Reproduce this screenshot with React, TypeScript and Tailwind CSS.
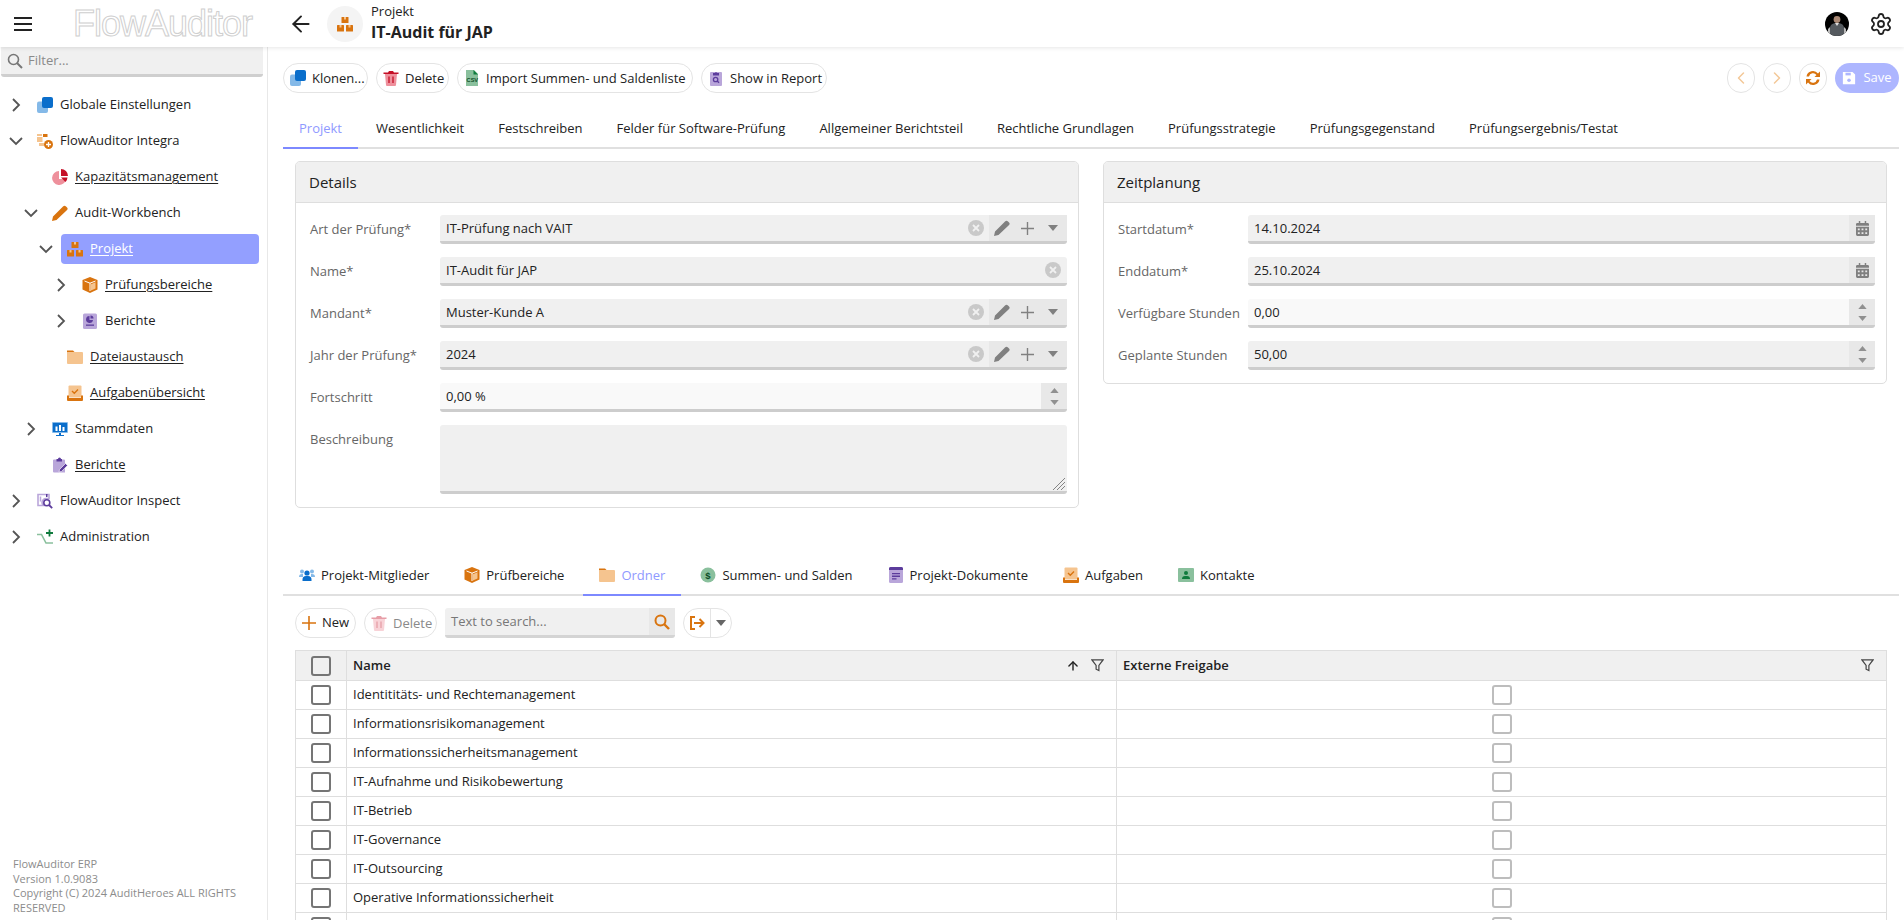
import type { ReactNode } from "react";
import { ArrowLeft, ArrowUp, ChevronLeft, ChevronRight, Settings } from "lucide-react";

type IconProps = { className?: string };

function Svg({ className = "size-4", children }: IconProps & { children: ReactNode }) {
  return (
    <svg viewBox="0 0 16 16" className={`shrink-0 ${className}`}>
      {children}
    </svg>
  );
}

const orange = "#d9740f";
const orangeLight = "#f5c48f";
const blue = "#0a6ecb";
const blueLight = "#84b9e8";
const red = "#c40f26";
const redLight = "#ee909c";
const purple = "#5c3c9c";
const purpleLight = "#b9a6da";
const green = "#0f7b3d";
const greenLight = "#8ac09d";

const CloneIcon = ({ className }: IconProps) => (
  <Svg className={className}>
    <rect x="0" y="4.5" width="11" height="11.5" rx="2" fill={blueLight} />
    <rect x="5" y="0" width="11" height="11" rx="2" fill={blue} />
  </Svg>
);
const IntegraIcon = () => (
  <Svg>
    <rect x="0" y="4" width="5.5" height="5" fill={orangeLight} />
    <rect x="6" y="1" width="4.5" height="3" fill={orange} />
    <rect x="0" y="1" width="5" height="2" fill={orangeLight} />
    <rect x="2" y="10" width="5" height="3" fill={orangeLight} />
    <circle cx="11.5" cy="11.5" r="4.5" fill={orange} />
    <path d="M11.5 9v5M9 11.5h5" stroke="#fff" strokeWidth="1.3" />
  </Svg>
);
const PieIcon = () => (
  <Svg>
    <path d="M7 2a7 7 0 1 0 7 8H7z" fill={redLight} />
    <path d="M9 0a7 7 0 0 1 7 7H9z" fill={red} />
    <path d="M9 8.5h6.5A7 7 0 0 1 13.5 13z" fill={red} />
  </Svg>
);
const PencilIcon = () => (
  <Svg>
    <path d="M0 16l1-4.5L11 1.5a2 2 0 0 1 3 0l.8.8a2 2 0 0 1 0 3L4.5 15z" fill={orange} />
  </Svg>
);
const BoxesIcon = () => (
  <Svg>
    <rect x="4.5" y="1" width="7" height="6" rx="0.5" fill={orange} />
    <rect x="7" y="1" width="2" height="2.5" fill={orangeLight} />
    <rect x="0" y="9" width="7" height="6.5" rx="0.5" fill={orange} />
    <rect x="2.5" y="9" width="2" height="2.5" fill={orangeLight} />
    <rect x="9" y="9" width="7" height="6.5" rx="0.5" fill={orange} />
    <rect x="11.5" y="9" width="2" height="2.5" fill={orangeLight} />
  </Svg>
);
const CubeIcon = () => (
  <Svg>
    <path d="M8 0l7.5 3v9.5L8 16 .5 12.5V3z" fill={orange} />
    <path d="M2.5 4L8 6.2 13.5 4M8 6.2V14" fill="none" stroke="#fff" strokeWidth="1" />
    <path d="M9 7.2l4.5-2v6.4L9 13.6z" fill={orangeLight} />
  </Svg>
);
const ReportIcon = () => (
  <Svg>
    <rect x="1" y="0.5" width="14" height="15.5" rx="1.5" fill={purpleLight} />
    <path d="M7.5 3a3.5 3.5 0 1 0 3.5 4H7.5z" fill={purple} />
    <path d="M8.5 2.5a3 3 0 0 1 3 3h-3z" fill={purple} />
    <rect x="4" y="11.5" width="8" height="1.3" fill={purple} />
  </Svg>
);
const FolderIcon = () => (
  <Svg>
    <path d="M0 1.5h6l2 2H0z" fill={orange} />
    <rect x="0" y="3" width="16" height="12" rx="1" fill={orangeLight} />
  </Svg>
);
const TrayIcon = () => (
  <Svg>
    <rect x="1.5" y="0.5" width="13" height="12" rx="1" fill={orangeLight} />
    <path d="M5 6l2.3 2.2L11 4.5" fill="none" stroke={orange} strokeWidth="1.4" />
    <path d="M0 10.5h2v2.5h12v-2.5h2V15a1 1 0 0 1-1 1H1a1 1 0 0 1-1-1z" fill={orange} />
  </Svg>
);
const MonitorIcon = () => (
  <Svg>
    <rect x="0" y="1" width="16" height="11" rx="1" fill={blueLight} />
    <rect x="1" y="2" width="14" height="9" fill={blue} />
    <path d="M3.5 5.5h2V10h-2zM7 4h2v6H7zM10.5 6h2v4h-2z" fill="#fff" />
    <path d="M7 12h2v2h3v1H4v-1h3z" fill={blue} />
  </Svg>
);
const ClipboardPenIcon = () => (
  <Svg>
    <path d="M1 3.5a1 1 0 0 1 1-1h10a1 1 0 0 1 1 1v12H2a1 1 0 0 1-1-1z" fill={purpleLight} />
    <path d="M4.5 2h1.5a1.5 1.5 0 0 1 3 0H10v2.5H4.5z" fill={purple} />
    <path d="M7 15l.6-2.6L13.5 6.5l2 2-5.9 5.9z" fill={purple} stroke="#fff" strokeWidth="0.6" />
  </Svg>
);
const InspectIcon = () => (
  <Svg>
    <path d="M1 1.5h11v4H9.5a4 4 0 0 0-3 7H1z" fill="none" stroke={purpleLight} strokeWidth="1.6" />
    <path d="M3.5 3.5v5" stroke={purpleLight} strokeWidth="1.5" />
    <path d="M9 1v3h1.5V1z" fill={purple} />
    <circle cx="9.8" cy="9.8" r="3" fill="none" stroke={purple} strokeWidth="1.6" />
    <path d="M12 12l3.2 3.2" stroke={purple} strokeWidth="1.8" />
  </Svg>
);
const AdminIcon = () => (
  <Svg>
    <path d="M0 5.5h4.5L9 14h7" fill="none" stroke={greenLight} strokeWidth="1.6" />
    <path d="M12.5 0.5v7M9 4h7" stroke={green} strokeWidth="1.8" />
  </Svg>
);
const TrashIcon = ({ faded }: { faded?: boolean }) => (
  <Svg className={`size-4 ${faded ? "opacity-40" : ""}`}>
    <path d="M2 4h12l-1 11a1 1 0 0 1-1 1H4a1 1 0 0 1-1-1z" fill={redLight} />
    <path d="M0.5 2.5H5L6 1h4l1 1.5h4.5V4H.5z" fill={red} />
    <path d="M6 6.5v6.5M10 6.5v6.5" stroke={red} strokeWidth="1.3" />
  </Svg>
);
const CsvIcon = () => (
  <Svg>
    <path d="M2 0h8l4 4v12H2z" fill={greenLight} />
    <path d="M9.5 0L14 4.5H9.5z" fill={green} />
    <text x="2.6" y="12.4" fontSize="5.6" fontWeight="700" fill="#0a4d26" fontFamily="Liberation Sans">
      CSV
    </text>
  </Svg>
);
const ClipboardSearchIcon = () => (
  <Svg>
    <rect x="2" y="2" width="12" height="14" rx="1" fill={purpleLight} />
    <path d="M5 3h1.8a1.3 1.3 0 0 1 2.4 0H11v2.5H5z" fill={purple} />
    <circle cx="7.6" cy="9.5" r="2.2" fill="none" stroke={purple} strokeWidth="1.3" />
    <path d="M9.2 11l1.8 1.8" stroke={purple} strokeWidth="1.4" />
  </Svg>
);
const UsersIcon = () => (
  <Svg>
    <circle cx="3" cy="4.5" r="2" fill={blueLight} />
    <circle cx="13" cy="4.5" r="2" fill={blueLight} />
    <path d="M0 10a3 3 0 0 1 3-3h1v3zM12 7h1a3 3 0 0 1 3 3h-4z" fill={blueLight} />
    <circle cx="8" cy="6" r="2.6" fill={blue} />
    <path d="M3.5 14v-1.5A3.5 3.5 0 0 1 7 9h2a3.5 3.5 0 0 1 3.5 3.5V14z" fill={blue} />
  </Svg>
);
const DollarIcon = () => (
  <Svg>
    <circle cx="8" cy="8" r="7.5" fill={greenLight} />
    <text x="5.2" y="11.5" fontSize="9.5" fontWeight="700" fill="#0a4d26" fontFamily="Liberation Sans">
      $
    </text>
  </Svg>
);
const DocIcon = () => (
  <Svg>
    <rect x="1" y="0" width="14" height="16" rx="1.5" fill={purpleLight} />
    <path d="M1 1.5A1.5 1.5 0 0 1 2.5 0h11A1.5 1.5 0 0 1 15 1.5V3H1z" fill={purple} />
    <path d="M4 6h8v1.3H4zM4 8.6h8v1.3H4zM4 11.2h4.5v1.3H4z" fill={purple} />
  </Svg>
);
const ContactIcon = () => (
  <Svg>
    <rect x="0" y="1" width="16" height="14" rx="1" fill={greenLight} />
    <circle cx="8" cy="6" r="2" fill={green} />
    <path d="M4 12a3 3 0 0 1 3-3h2a3 3 0 0 1 3 3z" fill={green} />
  </Svg>
);

function Chevron({ dir }: { dir: "right" | "down" }) {
  return (
    <svg viewBox="0 0 14 14" className="size-[14px] shrink-0">
      <path
        d={dir === "right" ? "M4 1l6 6-6 6" : "M1 4l6 6 6-6"}
        fill="none"
        stroke="#555"
        strokeWidth="1.8"
      />
    </svg>
  );
}

const levelPadding = ["pl-[9px]", "pl-[24px]", "pl-[39px]", "pl-[54px]"];

type TreeItem = {
  label: string;
  level: number;
  icon: ReactNode;
  chevron?: "right" | "down";
  link?: boolean;
  selected?: boolean;
};

const tree: TreeItem[] = [
  { label: "Globale Einstellungen", level: 0, icon: <CloneIcon />, chevron: "right" },
  { label: "FlowAuditor Integra", level: 0, icon: <IntegraIcon />, chevron: "down" },
  { label: "Kapazitätsmanagement", level: 1, icon: <PieIcon />, link: true },
  { label: "Audit-Workbench", level: 1, icon: <PencilIcon />, chevron: "down" },
  { label: "Projekt", level: 2, icon: <BoxesIcon />, chevron: "down", link: true, selected: true },
  { label: "Prüfungsbereiche", level: 3, icon: <CubeIcon />, chevron: "right", link: true },
  { label: "Berichte", level: 3, icon: <ReportIcon />, chevron: "right" },
  { label: "Dateiaustausch", level: 2, icon: <FolderIcon />, link: true },
  { label: "Aufgabenübersicht", level: 2, icon: <TrayIcon />, link: true },
  { label: "Stammdaten", level: 1, icon: <MonitorIcon />, chevron: "right" },
  { label: "Berichte", level: 1, icon: <ClipboardPenIcon />, link: true },
  { label: "FlowAuditor Inspect", level: 0, icon: <InspectIcon />, chevron: "right" },
  { label: "Administration", level: 0, icon: <AdminIcon />, chevron: "right" },
];

function TreeRow({ item }: { item: TreeItem }) {
  return (
    <div className={`flex h-9 items-center pr-2 ${levelPadding[item.level]}`}>
      <div className="flex w-[14px] shrink-0 justify-center">
        {item.chevron && <Chevron dir={item.chevron} />}
      </div>
      <div
        className={`ml-2 flex h-[30px] flex-1 items-center gap-[7px] rounded-[4px] px-[6px] ${
          item.selected ? "bg-[#939fff] text-white" : "text-[#222]"
        }`}
      >
        {item.icon}
        <span className={item.link ? "underline underline-offset-2" : ""}>{item.label}</span>
      </div>
    </div>
  );
}

function Sidebar() {
  return (
    <aside className="z-10 flex w-[268px] shrink-0 flex-col border-r border-[#e8e8e8]">
      <div className="mx-px flex h-[30px] w-[262px] items-center gap-[5px] rounded-b-[3px] border-b-[3px] border-[#cfcfcf] bg-[#f0f0f0] px-[6px] text-[#8a8a8a]">
        <svg viewBox="0 0 16 16" className="size-4 shrink-0">
          <circle cx="6.5" cy="6.5" r="5" fill="none" stroke="#777" strokeWidth="1.6" />
          <path d="M10 10l5 5" stroke="#777" strokeWidth="2" />
        </svg>
        Filter...
      </div>
      <nav className="mt-[10px]">
        {tree.map((item, i) => (
          <TreeRow key={i} item={item} />
        ))}
      </nav>
      <div className="mt-auto mb-[5px] px-[13px] text-[11px] leading-[14.4px] text-[#8c8c8c]">
        <p>FlowAuditor ERP</p>
        <p>Version 1.0.9083</p>
        <p>Copyright (C) 2024 AuditHeroes ALL RIGHTS RESERVED</p>
      </div>
    </aside>
  );
}

function Header() {
  return (
    <header className="relative z-20 flex h-[47px] shrink-0 items-center bg-white shadow-[0_1px_4px_rgba(0,0,0,0.1)]">
      <svg viewBox="0 0 18 14" className="ml-[14px] h-[14px] w-[18px] shrink-0">
        <path d="M0 1h18M0 7h18M0 13h18" stroke="#222" strokeWidth="2" />
      </svg>
      <div className="ml-[41px] w-[190px] font-['Liberation_Sans',sans-serif] text-[36px] leading-none tracking-[-1px] text-transparent [-webkit-text-stroke:1px_#cfcfcf]">
        FlowAuditor
      </div>
      <ArrowLeft className="ml-[25px] size-[26px] shrink-0 text-[#222]" strokeWidth={1.8} />
      <div className="ml-[13px] flex size-9 items-center justify-center rounded-full bg-[#f4f4f4]">
        <BoxesIcon />
      </div>
      <div className="ml-[8px] flex flex-col pb-[3px] leading-[21px] text-[#222]">
        <span>Projekt</span>
        <span className="text-[16px] font-bold">IT-Audit für JAP</span>
      </div>
      <div className="ml-auto mr-[11px] flex items-center gap-[20px]">
        <svg viewBox="0 0 24 24" className="size-6 rounded-full bg-black">
          <circle cx="12" cy="7.5" r="3.4" fill="#a98874" />
          <path d="M5 24v-8q0-4 5-5h4q5 1 5 5v8z" fill="#555a5f" />
          <path d="M10 11l2 3 2-3z" fill="#ddd" />
          <path d="M3 24v-7l2-2v9zM21 24v-7l-2-2v9z" fill="#bbb" />
        </svg>
        <Settings className="size-6 text-[#222]" strokeWidth={1.8} />
      </div>
    </header>
  );
}

function Pill({
  icon,
  label,
  faded,
  width,
}: {
  icon: ReactNode;
  label: string;
  faded?: boolean;
  width: string;
}) {
  return (
    <button
      className={`flex h-[30px] items-center gap-[6px] rounded-full border border-[#e4e4e4] pl-[6px] ${width} ${
        faded ? "text-[#8a8a8a]" : "text-[#222]"
      }`}
    >
      {icon}
      <span className="pt-px">{label}</span>
    </button>
  );
}

function RoundButton({ children }: { children: ReactNode }) {
  return (
    <button className="flex h-[30px] w-[28px] items-center justify-center rounded-full border border-[#e4e4e4]">
      {children}
    </button>
  );
}

function Toolbar() {
  return (
    <div className="mt-4 flex items-center gap-2">
      <Pill icon={<CloneIcon />} label="Klonen..." width="w-[85px]" />
      <Pill icon={<TrashIcon />} label="Delete" width="w-[73px]" />
      <Pill icon={<CsvIcon />} label="Import Summen- und Saldenliste" width="w-[236px]" />
      <Pill icon={<ClipboardSearchIcon />} label="Show in Report" width="w-[126px]" />
      <div className="ml-auto flex items-center gap-2">
        <RoundButton>
          <ChevronLeft className="size-[20px] text-[#f3c898]" strokeWidth={1.8} />
        </RoundButton>
        <RoundButton>
          <ChevronRight className="size-[20px] text-[#f3c898]" strokeWidth={1.8} />
        </RoundButton>
        <RoundButton>
          <svg viewBox="0 0 16 16" className="size-4">
            <path
              d="M1.5 6.5A6.5 6.5 0 0 1 13 3.5L15 1.5V7H9.5l2-2A4.2 4.2 0 0 0 4 6.5zM14.5 9.5A6.5 6.5 0 0 1 3 12.5L1 14.5V9h5.5l-2 2a4.2 4.2 0 0 0 7.5-1.5z"
              fill={orange}
            />
          </svg>
        </RoundButton>
        <button className="flex h-[30px] w-[64px] items-center justify-center gap-[7px] rounded-full bg-[#adb6ff] text-white">
          <svg viewBox="0 0 16 16" className="size-[14px]">
            <path d="M1 1h11l3 3v11H1z" fill="#fff" />
            <rect x="4" y="2" width="6" height="3" fill="#adb6ff" />
            <circle cx="8" cy="10.5" r="2" fill="#adb6ff" />
          </svg>
          Save
        </button>
      </div>
    </div>
  );
}

const topTabs = [
  "Projekt",
  "Wesentlichkeit",
  "Festschreiben",
  "Felder für Software-Prüfung",
  "Allgemeiner Berichtsteil",
  "Rechtliche Grundlagen",
  "Prüfungsstrategie",
  "Prüfungsgegenstand",
  "Prüfungsergebnis/Testat",
];

function TopTabs() {
  return (
    <div className="mt-4 flex h-10 gap-[2px] border-b-2 border-[#e0e0e0]">
      {topTabs.map((t, i) => (
        <div
          key={t}
          className={`-mb-[2px] flex items-center border-b-2 px-4 pt-px ${
            i === 0 ? "border-[#7d89ff] text-[#8f99ff]" : "border-transparent text-[#222]"
          }`}
        >
          {t}
        </div>
      ))}
    </div>
  );
}

function Input({
  value,
  light,
  tall,
  children,
}: {
  value?: string;
  light?: boolean;
  tall?: boolean;
  children?: ReactNode;
}) {
  return (
    <div
      className={`relative flex flex-1 items-stretch rounded-[3px] border-b-[3px] border-[#cdcdcd] text-[#222] ${
        tall ? "h-[69px]" : "h-[29px]"
      } ${light ? "bg-[#f9f9f9]" : "bg-[#f0f0f0]"}`}
    >
      <span className="flex-1 self-center truncate pl-[6px] pt-px">{value}</span>
      {children}
    </div>
  );
}

function ClearIcon() {
  return (
    <svg viewBox="0 0 16 16" className="size-4 shrink-0 self-center">
      <circle cx="8" cy="8" r="8" fill="#c9c9c9" />
      <path d="M5 5l6 6M11 5l-6 6" stroke="#f0f0f0" strokeWidth="1.8" />
    </svg>
  );
}

function LookupButtons() {
  return (
    <>
      <div className="mr-[5px] flex">
        <ClearIcon />
      </div>
      <div className="flex w-[78px] items-center gap-[11px] bg-[#e8e8e8] pl-[5px]">
        <svg viewBox="0 0 16 16" className="size-4 shrink-0">
          <path d="M0 16l1-4.5L11 1.5a2 2 0 0 1 3 0l.8.8a2 2 0 0 1 0 3L4.5 15z" fill="#808080" />
        </svg>
        <svg viewBox="0 0 14 14" className="size-[13px] shrink-0">
          <path d="M7 0v14M0 7h14" stroke="#808080" strokeWidth="1.5" />
        </svg>
        <svg viewBox="0 0 10 6" className="ml-[3px] h-[6px] w-[10px] shrink-0">
          <path d="M0 0h10L5 6z" fill="#808080" />
        </svg>
      </div>
    </>
  );
}

function Spinner() {
  return (
    <div className="flex w-[26px] flex-col items-center justify-center gap-[7px] bg-[#e8e8e8]">
      <svg viewBox="0 0 10 6" className="h-[5px] w-[9px]">
        <path d="M0 6h10L5 0z" fill="#909090" />
      </svg>
      <svg viewBox="0 0 10 6" className="h-[5px] w-[9px]">
        <path d="M0 0h10L5 6z" fill="#909090" />
      </svg>
    </div>
  );
}

function CalendarButton() {
  return (
    <div className="flex w-[26px] items-center justify-center bg-[#e8e8e8]">
      <svg viewBox="0 0 14 16" className="h-[15px] w-[13px]">
        <path d="M3 0h1.6v2h4.8V0H11v2h1.5A1.5 1.5 0 0 1 14 3.5V5H0V3.5A1.5 1.5 0 0 1 1.5 2H3z" fill="#808080" />
        <path
          d="M0 6h14v8.5a1.5 1.5 0 0 1-1.5 1.5h-11A1.5 1.5 0 0 1 0 14.5zM2 8v2h2V8zm4 0v2h2V8zm4 0v2h2V8zM2 12v2h2v-2zm4 0v2h2v-2zm4 0v2h2v-2z"
          fill="#808080"
          fillRule="evenodd"
        />
      </svg>
    </div>
  );
}

function Field({ label, tall, children }: { label: string; tall?: boolean; children: ReactNode }) {
  return (
    <div className={`flex ${tall ? "items-start" : "items-center"}`}>
      <label className={`w-[130px] shrink-0 text-[#666] ${tall ? "pt-[5px]" : "pt-px"}`}>{label}</label>
      {children}
    </div>
  );
}

function Panel({ title, children }: { title: string; children: ReactNode }) {
  return (
    <section className="overflow-hidden rounded-[5px] border border-[#dedede]">
      <h2 className="flex h-[41px] items-center border-b border-[#dedede] bg-[#f0f0f0] px-[13px] text-[15px] text-[#222]">
        {title}
      </h2>
      <div className="flex flex-col gap-[13px] pb-[13px] pl-[14px] pr-[11px] pt-[12px]">{children}</div>
    </section>
  );
}

function Panels() {
  return (
    <div className="mt-3 grid grid-cols-2 items-start gap-6 pl-3 pr-3">
      <Panel title="Details">
        <Field label="Art der Prüfung*">
          <Input value="IT-Prüfung nach VAIT">
            <LookupButtons />
          </Input>
        </Field>
        <Field label="Name*">
          <Input value="IT-Audit für JAP">
            <div className="mr-[6px] flex">
              <ClearIcon />
            </div>
          </Input>
        </Field>
        <Field label="Mandant*">
          <Input value="Muster-Kunde A">
            <LookupButtons />
          </Input>
        </Field>
        <Field label="Jahr der Prüfung*">
          <Input value="2024">
            <LookupButtons />
          </Input>
        </Field>
        <Field label="Fortschritt">
          <Input value="0,00 %" light>
            <Spinner />
          </Input>
        </Field>
        <Field label="Beschreibung" tall>
          <Input tall>
            <svg viewBox="0 0 14 14" className="absolute bottom-0 right-px size-[14px]">
              <path d="M13 1L1 13M13 5L5 13M13 9l-4 4" stroke="#777" strokeWidth="0.9" />
            </svg>
          </Input>
        </Field>
      </Panel>
      <Panel title="Zeitplanung">
        <Field label="Startdatum*">
          <Input value="14.10.2024">
            <CalendarButton />
          </Input>
        </Field>
        <Field label="Enddatum*">
          <Input value="25.10.2024">
            <CalendarButton />
          </Input>
        </Field>
        <Field label="Verfügbare Stunden">
          <Input value="0,00" light>
            <Spinner />
          </Input>
        </Field>
        <Field label="Geplante Stunden">
          <Input value="50,00">
            <Spinner />
          </Input>
        </Field>
      </Panel>
    </div>
  );
}

const bottomTabs: { label: string; icon: ReactNode; active?: boolean }[] = [
  { label: "Projekt-Mitglieder", icon: <UsersIcon /> },
  { label: "Prüfbereiche", icon: <CubeIcon /> },
  { label: "Ordner", icon: <FolderIcon />, active: true },
  { label: "Summen- und Salden", icon: <DollarIcon /> },
  { label: "Projekt-Dokumente", icon: <DocIcon /> },
  { label: "Aufgaben", icon: <TrayIcon /> },
  { label: "Kontakte", icon: <ContactIcon /> },
];

function BottomTabs() {
  return (
    <div className="mt-[48px] flex h-10 gap-[3px] border-b-2 border-[#e0e0e0]">
      {bottomTabs.map((t) => (
        <div
          key={t.label}
          className={`-mb-[2px] flex items-center gap-[6px] border-b-2 px-4 ${
            t.active ? "border-[#7d89ff] text-[#8f99ff]" : "border-transparent text-[#222]"
          }`}
        >
          {t.icon}
          <span className="pt-[2px]">{t.label}</span>
        </div>
      ))}
    </div>
  );
}

function GridToolbar() {
  return (
    <div className="mt-3 flex items-center gap-2 pl-3">
      <button className="flex h-[30px] w-[61px] items-center gap-[6px] rounded-full border border-[#e4e4e4] pl-[6px] text-[#222]">
        <svg viewBox="0 0 14 14" className="size-[14px]">
          <path d="M7 0v14M0 7h14" stroke={orange} strokeWidth="1.6" />
        </svg>
        New
      </button>
      <Pill icon={<TrashIcon faded />} label="Delete" faded width="w-[73px]" />
      <div className="flex h-[30px] w-[230px] rounded-[3px] border-b-[3px] border-[#d4d4d4] bg-[#f0f0f0] text-[#777]">
        <span className="flex-1 self-center pl-[6px]">Text to search...</span>
        <div className="flex w-[26px] items-center justify-center bg-[#e8e8e8]">
          <svg viewBox="0 0 16 16" className="size-4">
            <circle cx="6.5" cy="6.5" r="5" fill="none" stroke={orange} strokeWidth="2" />
            <path d="M10 10l5 5" stroke={orange} strokeWidth="2.4" />
          </svg>
        </div>
      </div>
      <div className="flex h-[30px] w-[49px] overflow-hidden rounded-full border border-[#e4e4e4]">
        <div className="flex w-[27px] items-center justify-center border-r border-[#e4e4e4]">
          <svg viewBox="0 0 16 16" className="size-4">
            <path d="M6 2H2v12h4" fill="none" stroke={orange} strokeWidth="2" />
            <path d="M5 8h9M10.5 4l4 4-4 4" fill="none" stroke={orange} strokeWidth="2" />
          </svg>
        </div>
        <div className="flex flex-1 items-center justify-center">
          <svg viewBox="0 0 10 6" className="h-[6px] w-[10px]">
            <path d="M0 0h10L5 6z" fill="#666" />
          </svg>
        </div>
      </div>
    </div>
  );
}

function Checkbox({ light }: { light?: boolean }) {
  return (
    <span
      className={`mx-auto block size-[20px] rounded-[3px] border-2 ${
        light ? "border-[#bdbdbd]" : "border-[#757575]"
      }`}
    />
  );
}

function FunnelIcon() {
  return (
    <svg viewBox="0 0 14 14" className="size-[13px] shrink-0">
      <path d="M1 1h12L8.5 7v5.5l-3-1.5V7z" fill="none" stroke="#444" strokeWidth="1.3" />
    </svg>
  );
}

const folders = [
  "Identititäts- und Rechtemanagement",
  "Informationsrisikomanagement",
  "Informationssicherheitsmanagement",
  "IT-Aufnahme und Risikobewertung",
  "IT-Betrieb",
  "IT-Governance",
  "IT-Outsourcing",
  "Operative Informationssicherheit",
  "",
];

function FolderGrid() {
  return (
    <div className="mt-3 pl-3 pr-3">
      <table className="w-full table-fixed border-collapse border border-[#dedede] text-left text-[#222]">
        <colgroup>
          <col className="w-[51px]" />
          <col className="w-[770px]" />
          <col />
        </colgroup>
        <thead>
          <tr className="h-[30px] bg-[#f0f0f0]">
            <th className="border border-[#dedede]">
              <Checkbox />
            </th>
            <th className="border border-[#dedede] pl-[6px] pr-[12px] font-semibold">
              <div className="flex items-center">
                <span className="flex-1">Name</span>
                <ArrowUp className="mr-[11px] size-[14px]" strokeWidth={2.4} />
                <FunnelIcon />
              </div>
            </th>
            <th className="border border-[#dedede] pl-[6px] pr-[12px] font-semibold">
              <div className="flex items-center">
                <span className="flex-1">Externe Freigabe</span>
                <FunnelIcon />
              </div>
            </th>
          </tr>
        </thead>
        <tbody>
          {folders.map((name, i) => (
            <tr key={i} className="h-[29px]">
              <td className="border border-[#dedede]">
                <Checkbox />
              </td>
              <td className="border border-[#dedede] pl-[6px]">{name}</td>
              <td className="border border-[#dedede]">
                <Checkbox light />
              </td>
            </tr>
          ))}
        </tbody>
      </table>
    </div>
  );
}

export default function App() {
  return (
    <div className="flex h-[920px] w-[1904px] flex-col overflow-hidden bg-white font-['Open_Sans',sans-serif] text-[13px]">
      <Header />
      <div className="flex min-h-0 flex-1">
        <Sidebar />
        <main className="min-w-0 flex-1 overflow-hidden pl-[15px] pr-[5px]">
          <Toolbar />
          <TopTabs />
          <Panels />
          <BottomTabs />
          <GridToolbar />
          <FolderGrid />
        </main>
      </div>
    </div>
  );
}
